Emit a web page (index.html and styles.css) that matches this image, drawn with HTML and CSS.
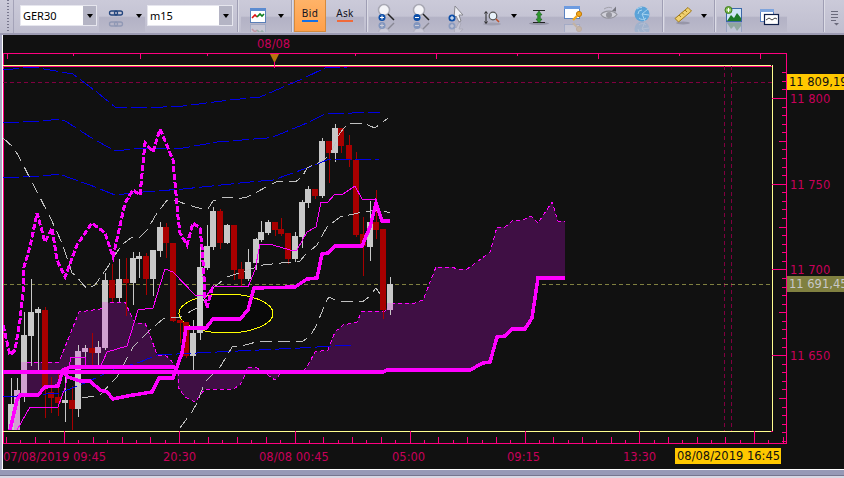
FILE: index.html
```html
<!DOCTYPE html>
<html lang="de">
<head>
    <meta charset="UTF-8">
    <meta name="viewport" content="width=device-width, initial-scale=1.0">
    <title>GER30 m15</title>
    <link rel="stylesheet" href="styles.css">
</head>
<body>
    <div class="toolbar">
        <div class="griff"></div>
        <div class="combo combo-symbol">
            <span class="comboTexto">GER30</span>
            <span class="comboBotao"><i class="seta"></i></span>
        </div>
        <div class="grupo grupo-link">
            <svg class="icone" viewBox="0 0 24 32">
                <g id="iLink" fill="none" stroke="#23457e" stroke-width="1.3">
                    <rect x="5.500" y="11" width="8" height="4" rx="2"/>
                    <rect x="10.500" y="11" width="8" height="4" rx="2"/>
                </g>
                <use href="#iLink" transform="matrix(1 0 0 -1 0 37)" opacity=".25"/>
            </svg>
            <i class="seta"></i>
        </div>
        <div class="combo combo-tempo">
            <span class="comboTexto">m15</span>
            <span class="comboBotao"><i class="seta"></i></span>
        </div>
        <div class="separador sep-a"></div>
        <div class="grupo grupo-tipo">
            <svg class="icone" viewBox="0 0 24 32">
                <g id="iTipo">
                    <rect x="4.500" y="8.500" width="15" height="14" fill="#fff" stroke="#5a7fb8"/>
                    <rect x="4" y="8" width="16" height="3" fill="#5b8bd0"/>
                    <path d="M6 18l3-3 2 2" fill="none" stroke="#e01010" stroke-width="1.600"/>
                    <path d="M11 17l3-3 2 2 2-2" fill="none" stroke="#108020" stroke-width="1.600"/>
                </g>
                <use href="#iTipo" transform="matrix(1 0 0 -1 0 47)" opacity=".2"/>
            </svg>
            <i class="seta"></i>
        </div>
        <div class="separador sep-b"></div>
        <div class="botaoBid">
            <span>Bid</span>
            <i class="traco traco-azul"></i>
        </div>
        <div class="botaoAsk">
            <span>Ask</span>
            <i class="traco traco-laranja"></i>
        </div>
        <div class="separador sep-c"></div>
        <div class="grupo grupo-ferramentas">
            <svg class="icone" viewBox="0 0 24 32">
                <g id="iZoomMais">
                    <circle cx="10" cy="10" r="5.500" fill="#f4f4f8" stroke="#a8a8b4" stroke-width="1.500"/>
                    <path d="M14 14l6 6" stroke="#222" stroke-width="1.500"/>
                    <circle cx="8" cy="17.500" r="3.500" fill="#0c4ea8"/>
                    <path d="M6 17.500h4M8 15.500v4" stroke="#fff"/>
                </g>
                <use href="#iZoomMais" transform="matrix(1 0 0 -1 0 43)" opacity=".3"/>
            </svg>
            <svg class="icone" viewBox="0 0 24 32">
                <g id="iZoomMenos">
                    <circle cx="10" cy="10" r="5.500" fill="#f4f4f8" stroke="#a8a8b4" stroke-width="1.500"/>
                    <path d="M14 14l6 6" stroke="#222" stroke-width="1.500"/>
                    <circle cx="8" cy="17.500" r="3.500" fill="#0c4ea8"/>
                    <path d="M6 17.500h4" stroke="#fff"/>
                </g>
                <use href="#iZoomMenos" transform="matrix(1 0 0 -1 0 43)" opacity=".3"/>
            </svg>
            <svg class="icone" viewBox="0 0 24 32">
                <g id="iCursor">
                    <path d="M11 6l8 9h-4l2 6-2 1-3-6-2 2z" fill="#f0f0f4" stroke="#888890"/>
                    <circle cx="8" cy="18" r="3.500" fill="#0c4ea8"/>
                    <path d="M6 18h4M8 16v4" stroke="#fff"/>
                </g>
                <use href="#iCursor" transform="matrix(1 0 0 -1 0 44)" opacity=".25"/>
            </svg>
            <svg class="icone" viewBox="0 0 24 32">
                <ellipse cx="12" cy="24" rx="9" ry="1.500" fill="#8a8a9a" opacity=".5"/>
                <path d="M6 12v11M4.500 13.500L6 11.500l1.500 2M4.500 21.500L6 23.500l1.500-2" fill="none" stroke="#222"/>
                <circle cx="13" cy="16" r="3.800" fill="#e8f2fa" stroke="#555" stroke-width="1.200"/>
                <path d="M16 19l3 3" stroke="#c0502a" stroke-width="1.600"/>
            </svg>
            <i class="seta"></i>
            <svg class="icone" viewBox="0 0 24 32">
                <ellipse cx="12" cy="23.500" rx="10" ry="1.500" fill="#777788" opacity=".55"/>
                <path d="M6 10.500h12M6 22.500h12" stroke="#222"/>
                <path d="M12 11l3 4h-1.700v4H15l-3 4-3-4h1.700v-4H9z" fill="#2f9a2c" stroke="#14601a" stroke-width=".6"/>
            </svg>
            <svg class="icone" viewBox="0 0 24 32">
                <g id="iJanela">
                    <rect x="3.500" y="6.500" width="15" height="12" fill="#fff" stroke="#5b82c0"/>
                    <rect x="3" y="6" width="16" height="3" fill="#6d9be0"/>
                    <circle cx="18" cy="14" r="2.600" fill="#f2a81c" stroke="#c07808"/>
                    <path d="M16 16l-4 4" stroke="#f2a81c" stroke-width="2.400"/>
                </g>
                <use href="#iJanela" transform="matrix(1 0 0 -1 0 43)" opacity=".2"/>
            </svg>
            <svg class="icone icone-apagado" viewBox="0 0 24 32">
                <path d="M4 14.500c3-4 12-5 16 0-4 5-13 5-16 0z" fill="#d4d4dc" stroke="#8c8c94" stroke-width="1.200"/>
                <circle cx="12" cy="15" r="3" fill="#8c8c94"/>
                <path d="M15 11l4-4.500v5z" fill="#67676f"/>
                <path d="M7 9c3-2 6-2 8-1" fill="none" stroke="#9a9aa2"/>
            </svg>
            <svg class="icone" viewBox="0 0 24 32">
                <g id="iGlobo">
                    <circle cx="12" cy="14" r="7.500" fill="#5ba3d8"/>
                    <path d="M12 14L18 9M12 14l7 1M12 14l3 7M7 9a7 7 0 0 1 5-1.500M8 14a4 4 0 0 1 4-4M9 18a5 5 0 0 0 7 0" fill="none" stroke="#a8d4f0"/>
                </g>
                <use href="#iGlobo" transform="matrix(1 0 0 -1 0 43)" opacity=".25"/>
            </svg>
        </div>
        <div class="separador sep-d"></div>
        <div class="grupo grupo-regua">
            <svg class="icone" viewBox="0 0 24 32">
                <ellipse cx="12" cy="23" rx="7" ry="1.500" fill="#77778a" opacity=".5"/>
                <path d="M4 18.500L17 7.500l3.500 3.500L7.500 22z" fill="#f0d070" stroke="#a07a18"/>
                <path d="M8 15l2 2M11 12.500l2 2M14 10l2 2" stroke="#a07a18"/>
            </svg>
            <i class="seta"></i>
        </div>
        <div class="separador sep-e"></div>
        <div class="grupo grupo-janelas">
            <svg class="icone" viewBox="0 0 24 32">
                <g id="iImagem">
                    <rect x="4.500" y="8.500" width="15" height="13" fill="#cfe4f6" stroke="#3c68a8"/>
                    <path d="M5 21l4-6 3 3 3-5 4 5v3z" fill="#1d7a28"/>
                </g>
                <use href="#iImagem" transform="matrix(1 0 0 -1 0 44)" opacity=".25"/>
                <circle cx="6.500" cy="10" r="3.500" fill="#7ab648" stroke="#3f7e22"/>
                <path d="M4.500 10h4M6.500 8v4" stroke="#fff"/>
            </svg>
            <svg class="icone" viewBox="0 0 24 32">
                <rect x="2.500" y="9.500" width="13" height="12" fill="#fff" stroke="#5b82c0"/>
                <rect x="2" y="9" width="14" height="3" fill="#7ea4dc"/>
                <rect x="6.500" y="14.500" width="14" height="10" fill="#fff" stroke="#10204a" stroke-width="1.200"/>
                <path d="M8 20l3-2 3 2 3-2 2 1" fill="none" stroke="#444"/>
            </svg>
        </div>
        <div class="separador sep-f"></div>
        <svg class="icone-menu" viewBox="0 0 9 16">
            <path d="M1 1.500h7M1 4.500h7M1 7.500h7M1 10.500h5" stroke="#6a6a7c"/>
            <path d="M4 13h5l-2.500 2.500z" fill="#6a6a7c"/>
        </svg>
    </div>

    <div class="painel">
        <svg class="grafico" viewBox="3 35 841 434">
            <!-- eixos -->
            <path class="eixo" d="M3 53H786V443H3zM3 66H772V431H3z"/>
            <path class="borda" d="M3 65H771M772 65V431M3 431H771"/>
            <path class="eixo" d="M7 53v6M73 53v3M140 53v6M207 53v3M355 53v3M436 53v6M517 53v3M598 53v6M679 53v3M760 53v6"/>
            <path class="eixo" d="M772 98H786M772 184H786M772 269H786M772 355H786"/>
            <path class="eixo" d="M779 141h7M779 227h7M779 312h7M779 398h7"/>
            <path class="eixo" d="M782 72h4M782 81h4M782 89h4M782 107h4M782 115h4M782 124h4M782 132h4M782 149h4M782 158h4M782 167h4M782 175h4M782 192h4M782 201h4M782 209h4M782 218h4M782 235h4M782 244h4M782 252h4M782 261h4M782 278h4M782 287h4M782 295h4M782 304h4M782 321h4M782 329h4M782 338h4M782 347h4M782 364h4M782 372h4M782 381h4M782 389h4M782 407h4M782 415h4M782 424h4M782 432h4M782 441h4"/>
            <path class="eixo" d="M64 431v12M179 431v12M295 431v12M410 431v12M525 431v12M639 431v12M754 431v12"/>
            <path class="eixo" d="M6 437v6M35 437v6M93 437v6M122 437v6M150 437v6M208 437v6M237 437v6M266 437v6M323 437v6M352 437v6M381 437v6M438 437v6M467 437v6M496 437v6M553 437v6M582 437v6M611 437v6M668 437v6M697 437v6M725 437v6M783 437v6"/>
            <path class="eixo" d="M20 440v3M49 440v3M78 440v3M107 440v3M136 440v3M165 440v3M194 440v3M222 440v3M251 440v3M280 440v3M309 440v3M338 440v3M366 440v3M395 440v3M424 440v3M453 440v3M482 440v3M510 440v3M539 440v3M568 440v3M596 440v3M625 440v3M654 440v3M682 440v3M711 440v3M740 440v3M768 440v3"/>
            <path class="marca" d="M270 54h9l-4 8h-1z"/>
            <path class="eixo" d="M274 62v6"/>

            <!-- linhas tracejadas -->
            <path class="mira" d="M3 82H722M733 82H772M724 66V431M731 66V431"/>
            <path class="preco" d="M3 284H772"/>

            <!-- nuvem -->
            <path class="nuvem" d="M20 395L27 362H59L79 312L100 309L110 302H125L131 315L135 323H145L150 335L157 355H165L170 359L178 372L175 367H70L63 372L58 386H45L38 395Z"/>
            <path class="nuvem" d="M177 372L178 387L185 397L195 402L205 389H233L240 385L245 375L247 372Z"/>
            <path class="nuvem" d="M247 372V367L257 368L265 373L275 380L280 374V372Z"/>
            <path class="nuvem" d="M303 371L307 367L315 352L328 350L335 332L343 325L357 322L362 311H385L390 303H415L423 300L427 290L436 267H452L457 269H467L473 265L490 252L497 227H505L512 221L523 220L531 216L538 223L552 202L558 221H565V278H538L532 318L525 329H512L505 336H497L490 362L483 363L470 370H387L383 372Z"/>
            <path class="bordaNuvem" d="M27 362H59L79 312L100 309L110 302H125L131 315L135 323H145L150 335L157 355H165L170 359L178 372L178 387L185 397L195 402L205 389H233L240 385L245 375L247 367L257 368L265 373L275 380L280 374"/>
            <path class="bordaNuvem" d="M303 371L307 367L315 352L328 350L335 332L343 325L357 322L362 311H385L390 303H415L423 300L427 290L436 267H452L457 269H467L473 265L490 252L497 227H505L512 221L523 220L531 216L538 223L552 202L558 221H565"/>

            <!-- elipse -->
            <ellipse class="elipse" cx="226" cy="313.500" rx="47" ry="19.500"/>

            <!-- candles -->
            <path class="pavioBranco" d="M11 378V430M17 378V430M24 312V402M31 279V366M38 307V373M65 373V422M78 345V417M85 345V357M98 341V367M105 273V350M119 259V302M133 252V305M139 252V278M153 250V296M160 222V257M193 320V370M200 247V340M207 225V270M213 207V250M227 224V244M248 249V281M256 238V270M261 221V242M268 220V235M295 232V262M302 200V248M308 186V208M322 138V198M335 124V162M370 201V261M390 277V315"/>
            <path class="pavioVermelho" d="M45 307V418M51 377V413M58 373V416M72 386V430M92 333V365M112 264V302M126 258V316M146 253V295M166 223V258M173 243V322M180 320V343M186 322V358M220 209V249M234 225V280M241 262V287M275 222V236M281 218V236M288 233V264M315 189V199M329 141V183M341 128V153M349 135V167M356 152V237M363 217V276M376 190V239M383 229V319"/>
            <path class="corpoBranco" d="M8 404h6v26h-6zM21 335h6v60h-6zM28 312h6v24h-6zM35 309h6v4h-6zM62 400h6v3h-6zM75 351h6v58h-6zM116 279h6v19h-6zM102 280h6v68h-6zM130 258h6v25h-6zM136 256h6v3h-6zM150 250h6v29h-6zM157 227h6v24h-6zM190 333h6v23h-6zM197 267h6v66h-6zM204 246h6v22h-6zM210 211h6v36h-6zM224 225h6v18h-6zM245 262h6v17h-6zM253 239h6v24h-6zM258 232h6v8h-6zM265 222h6v11h-6zM292 236h6v23h-6zM299 202h6v35h-6zM305 189h6v14h-6zM319 141h6v55h-6zM332 128h6v25h-6zM367 222h6v25h-6zM387 284h6v26h-6z"/>
            <path class="corpoTinto" d="M14 390h6v40h-6zM21 362h6v33h-6zM75 351h6v21h-6zM82 348h6v4h-6zM95 347h6v6h-6zM102 302h6v46h-6zM387 303h6v7h-6z"/>
            <path class="corpoVermelho" d="M42 310h6v78h-6zM48 392h6v6h-6zM55 397h6v6h-6zM69 400h6v9h-6zM89 348h6v5h-6zM109 280h6v18h-6zM123 279h6v4h-6zM143 256h6v23h-6zM163 227h6v16h-6zM170 243h6v78h-6zM177 320h6v3h-6zM183 322h6v34h-6zM217 211h6v32h-6zM231 225h6v45h-6zM238 269h6v10h-6zM272 222h6v8h-6zM278 229h6v5h-6zM285 233h6v26h-6zM312 189h6v7h-6zM326 141h6v12h-6zM338 128h6v18h-6zM346 145h6v15h-6zM353 160h6v75h-6zM360 234h6v12h-6zM373 222h6v8h-6zM380 229h6v81h-6z"/>

            <!-- bandas -->
            <path class="azul" d="M3 70L33 67L73 74L90 87L98 93L115 107H163L183 106L230 100L260 97L302 79L325 68L347 67"/>
            <path class="azul" d="M3 123L43 121L60 119L67 122L90 137L115 151L143 148H183L217 142L267 138L273 137L307 123L325 114L380 112"/>
            <path class="azul" d="M3 178L43 176L60 174L67 177L90 185L115 195L143 192L183 189L250 182L273 180L307 168L327 160L380 159"/>
            <path class="azul" d="M3 397L60 393L87 382L113 370L140 362L157 355L197 353L300 348L352 345"/>
            <path class="cinza" d="M3 138L13 147L18 155L50 217L62 243L72 273L75 275L87 289L95 285L107 268L117 252L123 244L132 237L140 237L147 230L157 213L162 207L167 200H175L185 204L202 209H208L213 201L222 198L230 197L237 199L247 197L253 194L270 185L278 181L295 182L302 177L307 168L320 162L330 155L340 133L348 123H363L375 128L388 118"/>
            <path class="cinza" d="M82 398L100 395L117 377L133 347L150 330L163 319L180 317L197 308L213 288L227 277L263 265L300 261L305 255L317 245L327 227L340 217L363 212L380 210L390 213"/>
            <path class="cinza" d="M180 428L192 412L197 403L203 387L207 380L220 367L225 359L232 347L245 345L260 341H285L302 342L310 336L315 328L322 312L325 303L329 297L337 301L362 302L369 297L376 288L382 297"/>

            <!-- linhas magenta -->
            <path class="fina" d="M17 430L30 407H58L65 388L71 357H85L86 368H100L107 352L127 346L138 310L153 308L165 269L173 272L195 295H207L213 286L248 287L255 270L260 244L273 245L290 250H297L307 232L316 227L321 202H328L335 194H343L355 186L362 199H377"/>
            <path class="tracejada" d="M3 325L10 355L15 350L20 320L23 293L24 267L30 247L37 213L45 242L52 228L57 260L65 277L77 245L92 223L105 233L113 257L125 203L133 190L140 195L145 143L153 152L160 129L173 160L178 217L180 233L187 245L193 223L200 228L202 247L204 277L205 298L207 308L213 285"/>
            <path class="tracejadaFina" d="M15 405L10 430"/>
            <path class="grossa" d="M3 372H383L387 370H470L483 363L490 362L497 337L505 336L512 329H525L532 318L538 278H565"/>
            <path class="grossa" d="M10 430L17 400L20 395H38L45 387L58 386L63 370L70 367H175"/>
            <path class="grossa" d="M63 372L68 377L80 381H90L100 390L107 392L113 399L127 396L152 392L159 378H173L182 353L186 328H206L213 319H240L248 310L254 288L295 287L307 279L317 278L322 254L328 253L335 246H362L370 227L376 203L382 221H390"/>

            <!-- textos -->
            <text class="rotulo" x="257" y="48">08/08</text>
            <text class="rotulo" x="790" y="103">11 800</text>
            <text class="rotulo" x="790" y="189">11 750</text>
            <text class="rotulo" x="790" y="274">11 700</text>
            <text class="rotulo" x="790" y="360">11 650</text>
            <text class="rotulo" x="3" y="461">07/08/2019 09:45</text>
            <text class="rotulo" x="163" y="461">20:30</text>
            <text class="rotulo" x="259" y="461">08/08 00:45</text>
            <text class="rotulo" x="392" y="461">05:00</text>
            <text class="rotulo" x="507" y="461">09:15</text>
            <text class="rotulo" x="623" y="461">13:30</text>
            <rect class="caixaAmarela" x="787" y="74" width="57" height="16"/>
            <text class="textoAmarelo" x="789" y="86">11 809,19</text>
            <rect class="caixaOliva" x="787" y="276" width="57" height="16"/>
            <text class="textoOliva" x="789" y="288">11 691,45</text>
            <rect class="caixaAmarela" x="675" y="448" width="106" height="16"/>
            <text class="textoAmarelo" x="677" y="460">08/08/2019 16:45</text>
        </svg>
    </div>
    <div class="rodape"></div>
</body>
</html>
```

FILE: styles.css
```css
html, body {
    margin: 0;
    padding: 0;
    width: 844px;
    height: 478px;
    overflow: hidden;
}

body {
    background-color: #d8d8e4;
    font-family: "Noto Sans", sans-serif;
}

.toolbar {
    display: flex;
    align-items: flex-start;
    height: 33px;
    background: linear-gradient(#cbcad9, #bfbecf);
    border-bottom: 2px solid #9c9bb2;
}

.griff {
    width: 6px;
    height: 33px;
    margin-right: 6px;
    padding-left: 7px;
    border-right: 1px solid #a4a3b8;
    background: radial-gradient(circle, #77768c 1px, transparent 1px) 7px 5px / 2px 3px repeat-y;
    background-clip: content-box;
}

.combo {
    display: flex;
    height: 19px;
    margin-top: 5px;
    background-color: white;
    border: 1px solid #e6e6ee;
    box-sizing: content-box;
}

.combo-symbol {
    width: 75px;
}

.combo-tempo {
    width: 84px;
}

.comboTexto {
    flex: 1;
    padding-left: 2px;
    font-size: 11px;
    line-height: 19px;
    color: black;
}

.comboBotao {
    display: flex;
    align-items: center;
    justify-content: center;
    width: 13px;
    background-color: #b4b4c4;
}

.seta {
    display: block;
    width: 0;
    height: 0;
    border-style: solid;
    border-width: 4px 3.500px 0 3.500px;
    border-color: black transparent transparent transparent;
}

.grupo {
    display: grid;
    height: 32px;
    justify-items: center;
    align-items: center;
    background: linear-gradient(transparent 50%, #b3b2c5 55%, #bbbacb);
}

.grupo .icone {
    justify-self: center;
}

.icone {
    display: block;
    width: 24px;
    height: 32px;
}

.icone-apagado {
    opacity: .85;
}

.grupo-link {
    grid-template-columns: 34px 12px;
    width: 46px;
    margin-left: 2px;
    margin-right: 2px;
    padding-left: 0;
}

.grupo-tipo {
    grid-template-columns: 34px 12px;
    width: 50px;
    padding-left: 0;
}

.grupo-ferramentas {
    grid-template-columns: 34px 36px 34px 38px 6px 44px 24px 48px 18px;
    width: 293px;
    justify-content: start;
}

.grupo-regua {
    grid-template-columns: 34px 8px;
    width: 47px;
    padding-left: 1px;
    justify-content: start;
}

.grupo-janelas {
    grid-template-columns: 34px 38px;
    width: 70px;
    justify-content: start;
}

.separador {
    width: 1px;
    height: 32px;
    background-color: #9f9eb4;
    border-right: 1px solid #dcdce6;
}

.sep-a {
    margin: 0 2px 0 4px;
}

.sep-b {
    margin: 0 1px 0 0;
}

.sep-c {
    margin: 0 1px 0 2px;
}

.sep-d {
    margin: 0 1px 0 0;
}

.sep-e {
    margin: 0 1px;
}

.sep-f {
    margin: 0 5px 0 36px;
}

.botaoBid, .botaoAsk {
    display: flex;
    flex-direction: column;
    align-items: center;
    box-sizing: border-box;
    height: 32px;
    font-size: 10px;
    letter-spacing: .4px;
    color: #101020;
}

.botaoBid span, .botaoAsk span {
    margin-top: 6px;
    line-height: 14px;
}

.botaoBid {
    width: 32px;
    background: linear-gradient(#ffb368, #ffa04a);
    border: 1px solid #d58a3c;
    border-top: 0;
}

.botaoAsk {
    width: 38px;
    background: linear-gradient(transparent 50%, #b3b2c5 55%, #bbbacb);
}

.traco {
    display: block;
    width: 16px;
    height: 2px;
    margin-top: 0;
}

.traco-azul {
    background-color: #1570e6;
}

.traco-laranja {
    background-color: #f06a3a;
}

.icone-menu {
    display: block;
    width: 9px;
    height: 16px;
    margin-top: 10px;
}

.painel {
    display: flex;
    height: 435px;
    box-sizing: border-box;
    border-left: 2px solid #a9a9c2;
    border-bottom: 1px solid white;
}

.grafico {
    display: block;
    box-sizing: content-box;
    width: 841px;
    height: 434px;
    border-left: 1px solid white;
    background-color: #111111;
    font-family: "DejaVu Sans", sans-serif;
    font-size: 11.5px;
}

.rodape {
    height: 8px;
    box-sizing: border-box;
    background-color: #9799b6;
    border-bottom: 2px solid #d8d8e4;
    box-shadow: inset 0 -1px 0 #767690;
}

.eixo, .borda, .mira, .preco, .azul, .cinza, .fina, .tracejada, .tracejadaFina, .grossa, .bordaNuvem,
.pavioBranco, .pavioVermelho {
    fill: none;
    shape-rendering: crispEdges;
}

.eixo {
    stroke: #ff0080;
}

.borda {
    stroke: #ffff90;
}

.marca {
    fill: #b87410;
}

.mira {
    stroke: #800040;
    stroke-dasharray: 4 3;
}

.preco {
    stroke: #808040;
    stroke-dasharray: 4 3;
}

.nuvem {
    fill: #3f0f44;
}

.bordaNuvem {
    stroke: #ff00ff;
    stroke-dasharray: 4 3;
}

.elipse {
    fill: #090909;
    stroke: #ffff00;
    shape-rendering: crispEdges;
}

.pavioBranco {
    stroke: #c8c8c8;
}

.pavioVermelho {
    stroke: #a80000;
}

.corpoBranco, .corpoTinto, .corpoVermelho {
    shape-rendering: crispEdges;
}

.corpoBranco {
    fill: #c8c8c8;
}

.corpoTinto {
    fill: #d0a0d0;
}

.corpoVermelho {
    fill: #a80000;
}

.azul {
    stroke: #0000e6;
    stroke-dasharray: 16 4;
}

.cinza {
    stroke: #c0c0c0;
    stroke-dasharray: 12 6;
}

.fina {
    stroke: #ff00ff;
}

.tracejada {
    stroke: #ff00ff;
    stroke-width: 3;
    stroke-dasharray: 6 2;
}

.tracejadaFina {
    stroke: #ff00ff;
    stroke-dasharray: 4 3;
}

.grossa {
    stroke: #ff00ff;
    stroke-width: 3.5;
}

.rotulo {
    fill: #c8005a;
}

.caixaAmarela {
    fill: #ffc800;
}

.caixaOliva {
    fill: #808040;
}

.textoAmarelo {
    fill: #101010;
}

.textoOliva {
    fill: #c8c8c8;
}
```
